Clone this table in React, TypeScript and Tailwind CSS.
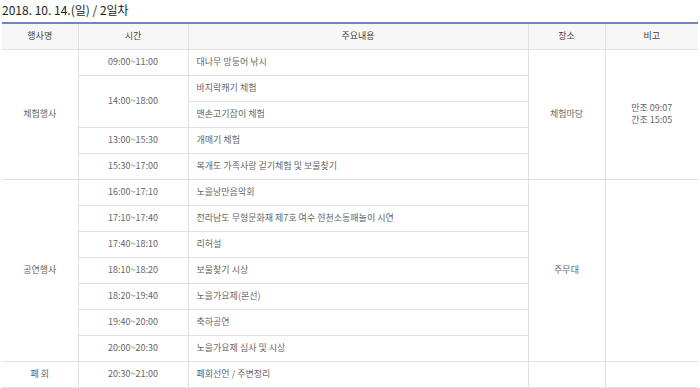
import React from "react";

type Row = {
  group?: { label: string; span: number };
  time?: { label: string; span: number };
  content: string;
  place?: { label: string; span: number };
  note?: { lines: string[]; span: number };
};

const rows: Row[] = [
  {
    group: { label: "체험행사", span: 5 },
    time: { label: "09:00~11:00", span: 1 },
    content: "대나무 망둥어 낚시",
    place: { label: "체험마당", span: 5 },
    note: { lines: ["만조 09:07", "간조 15:05"], span: 5 },
  },
  { time: { label: "14:00~18:00", span: 2 }, content: "바지락캐기 체험" },
  { content: "맨손고기잡이 체험" },
  { time: { label: "13:00~15:30", span: 1 }, content: "개매기 체험" },
  { time: { label: "15:30~17:00", span: 1 }, content: "복개도 가족사랑 걷기체험 및 보물찾기" },
  {
    group: { label: "공연행사", span: 7 },
    time: { label: "16:00~17:10", span: 1 },
    content: "노을낭만음악회",
    place: { label: "주무대", span: 7 },
    note: { lines: [], span: 7 },
  },
  { time: { label: "17:10~17:40", span: 1 }, content: "전라남도 무형문화재 제7호 여수 현천소동패놀이 시연" },
  { time: { label: "17:40~18:10", span: 1 }, content: "리허설" },
  { time: { label: "18:10~18:20", span: 1 }, content: "보물찾기 시상" },
  { time: { label: "18:20~19:40", span: 1 }, content: "노을가요제(본선)" },
  { time: { label: "19:40~20:00", span: 1 }, content: "축하공연" },
  { time: { label: "20:00~20:30", span: 1 }, content: "노을가요제 심사 및 시상" },
  {
    group: { label: "폐 회", span: 1 },
    time: { label: "20:30~21:00", span: 1 },
    content: "폐회선언 / 주변정리",
    place: { label: "", span: 1 },
    note: { lines: [], span: 1 },
  },
];

const cell = "border border-[#e1e1e1] text-center align-middle";

export default function App() {
  return (
    <div
      className="w-[700px] h-[388px] bg-white overflow-hidden text-[#666]"
      style={{ fontFamily: '"Noto Sans CJK KR", "Noto Sans", sans-serif' }}
    >
      <h2 className="pl-[2px] pt-[2px] h-[22px] text-[12px] leading-[16px] text-[#222] font-normal">
        2018. 10. 14.(일) / 2일차
      </h2>
      <table className="ml-[2px] w-[696px] table-fixed border-collapse border-t-2 border-t-[#7183c4] text-[9px] leading-[12px]">
        <colgroup>
          <col className="w-[76px]" />
          <col className="w-[110px]" />
          <col className="w-[340px]" />
          <col className="w-[77px]" />
          <col className="w-[93px]" />
        </colgroup>
        <thead>
          <tr className="h-[26px] bg-[#f7f7f7] text-[#444]">
            <th className={`${cell} border-l-0 font-normal`}>행사명</th>
            <th className={`${cell} font-normal`}>시간</th>
            <th className={`${cell} font-normal`}>주요내용</th>
            <th className={`${cell} font-normal`}>장소</th>
            <th className={`${cell} border-r-0 font-normal`}>비고</th>
          </tr>
        </thead>
        <tbody>
          {rows.map((r, i) => (
            <tr key={i} className="h-[26px]">
              {r.group && (
                <td rowSpan={r.group.span} className={`${cell} border-l-0`}>
                  {r.group.label}
                </td>
              )}
              {r.time && (
                <td rowSpan={r.time.span} className={cell}>
                  {r.time.label}
                </td>
              )}
              <td className={`${cell} text-left pl-[8px]`}>{r.content}</td>
              {r.place && (
                <td rowSpan={r.place.span} className={cell}>
                  {r.place.label}
                </td>
              )}
              {r.note && (
                <td rowSpan={r.note.span} className={`${cell} border-r-0`}>
                  {r.note.lines.map((l) => (
                    <div key={l}>{l}</div>
                  ))}
                </td>
              )}
            </tr>
          ))}
        </tbody>
      </table>
    </div>
  );
}
